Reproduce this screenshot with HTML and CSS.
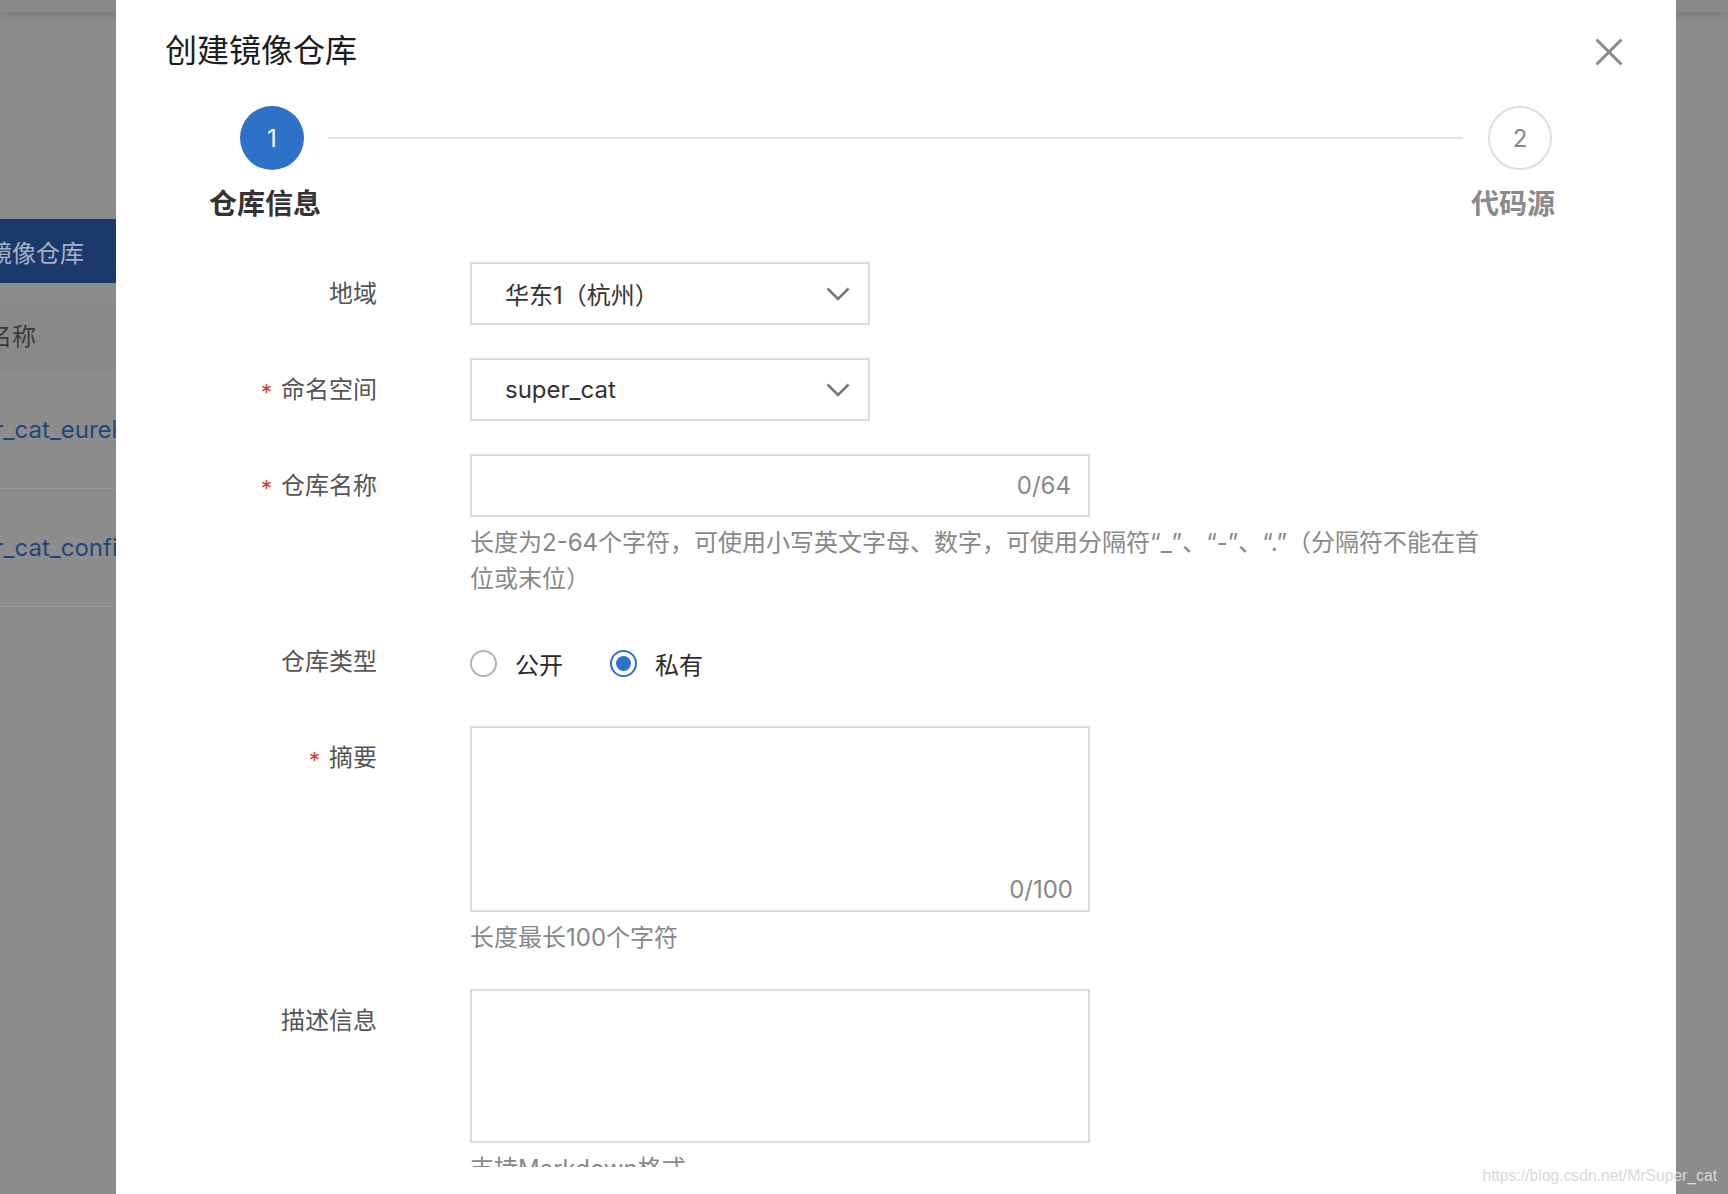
FILE: index.html
```html
<!DOCTYPE html>
<html lang="zh-CN">
<head>
<meta charset="utf-8">
<title>创建镜像仓库</title>
<link rel="stylesheet" href="styles.css">
</head>
<body>
<div class="app">
  <div class="topbar"></div>
  <div class="bg-column">
    <div class="nav-item"><span>镜像仓库</span></div>
    <div class="table-head"><span>名称</span></div>
    <div class="table-row"><span class="link">super_cat_eureka</span></div>
    <div class="table-row"><span class="link">super_cat_config</span></div>
  </div>
</div>

<div class="modal">
  <div class="modal-header">
    <div class="modal-title">创建镜像仓库</div>
    <svg class="close" width="28" height="28" viewBox="0 0 28 28"><path d="M1.5 1.5L26.5 26.5M26.5 1.5L1.5 26.5" stroke="#8a8a8a" stroke-width="3" fill="none"/></svg>
  </div>
  <div class="modal-body">
    <div class="steps">
      <div class="step active">
        <div class="step-dot">1</div>
        <div class="step-label">仓库信息</div>
      </div>
      <div class="step-line"></div>
      <div class="step pending">
        <div class="step-dot">2</div>
        <div class="step-label">代码源</div>
      </div>
    </div>

    <div class="form">
      <div class="form-row">
        <div class="form-label">地域</div>
        <div class="control">
          <div class="select narrow">
            <span>华东1（杭州）</span>
            <svg class="chevron" width="24" height="14" viewBox="0 0 24 14"><polyline points="1.5,1.5 12,12 22.5,1.5" stroke="#777" stroke-width="2.5" fill="none"/></svg>
          </div>
        </div>
      </div>

      <div class="form-row">
        <div class="form-label"><span class="req">*</span>命名空间</div>
        <div class="control">
          <div class="select narrow">
            <span>super_cat</span>
            <svg class="chevron" width="24" height="14" viewBox="0 0 24 14"><polyline points="1.5,1.5 12,12 22.5,1.5" stroke="#777" stroke-width="2.5" fill="none"/></svg>
          </div>
        </div>
      </div>

      <div class="form-row">
        <div class="form-label"><span class="req">*</span>仓库名称</div>
        <div class="control">
          <div class="input wide"><span class="counter">0/64</span></div>
          <div class="help">长度为2-64个字符，可使用小写英文字母、数字，可使用分隔符“_”、“-”、“.”（分隔符不能在首位或末位）</div>
        </div>
      </div>

      <div class="form-row">
        <div class="form-label">仓库类型</div>
        <div class="control">
          <div class="radio-group">
            <div class="radio"><span class="radio-circle"></span><span>公开</span></div>
            <div class="radio checked"><span class="radio-circle"></span><span>私有</span></div>
          </div>
        </div>
      </div>

      <div class="form-row">
        <div class="form-label"><span class="req">*</span>摘要</div>
        <div class="control">
          <div class="textarea summary"><span class="counter">0/100</span></div>
          <div class="help">长度最长100个字符</div>
        </div>
      </div>

      <div class="form-row">
        <div class="form-label">描述信息</div>
        <div class="control">
          <div class="textarea desc"></div>
          <div class="help">支持Markdown格式</div>
        </div>
      </div>
    </div>
  </div>
  <div class="modal-footer"></div>
</div>

<div class="watermark">https://blog.csdn.net/MrSuper_cat</div>
</body>
</html>
```

FILE: styles.css
```css
html, body {
  margin: 0;
  padding: 0;
}

body {
  width: 1728px;
  height: 1194px;
  overflow: hidden;
  position: relative;
  background: #8c8c8c;
  font-family: Inter, "Noto Sans CJK SC", sans-serif;
  text-spacing-trim: space-all;
}

/* background page (under mask) */
.app {
  height: 1194px;
}

.topbar {
  height: 12px;
  background: #898989;
  box-shadow: 0 3px 6px rgba(0, 0, 0, 0.12);
}

.bg-column {
  width: 116px;
  overflow: hidden;
  white-space: nowrap;
  font-size: 24px;
}

.nav-item {
  margin-top: 207px;
  height: 64px;
  background: #1b3a6b;
  color: #a3b1c6;
  display: flex;
  align-items: center;
}

.nav-item span {
  margin-left: -12px;
}

.table-head {
  margin-top: 22px;
  height: 66px;
  box-sizing: border-box;
  padding-bottom: 8px;
  background: #898989;
  color: #3b3b3b;
  display: flex;
  align-items: center;
}

.table-head span {
  margin-left: -12px;
}

.table-row {
  height: 117px;
  border-bottom: 1px solid #979797;
  display: flex;
  align-items: center;
}

.link {
  color: #1f477c;
  margin-left: -61px;
}

/* modal */
.modal {
  position: absolute;
  left: 116px;
  top: 0;
  width: 1560px;
  height: 1194px;
  background: #fff;
  display: flex;
  flex-direction: column;
}

.modal-header {
  display: flex;
  justify-content: space-between;
  align-items: center;
  padding: 28px 53px 0 49px;
  height: 44px;
}

.modal-title {
  font-size: 32px;
  line-height: 44px;
  color: #1c1c1c;
  margin-top: 2px;
}

.close {
  display: block;
  margin-top: 4px;
}

.modal-body {
  flex: 1;
  overflow: hidden;
}

.modal-footer {
  height: 27px;
  flex: none;
}

/* steps */
.steps {
  display: flex;
  align-items: flex-start;
  margin: 34px 107px 0 93px;
}

.step {
  display: flex;
  flex-direction: column;
  align-items: center;
}

.step-dot {
  width: 64px;
  height: 64px;
  box-sizing: border-box;
  border-radius: 50%;
  display: flex;
  align-items: center;
  justify-content: center;
  font-size: 24px;
}

.step.active .step-dot {
  background: #2e71c8;
  color: #fff;
}

.step.pending .step-dot {
  border: 2px solid #dedede;
  color: #888;
}

.step-label {
  margin-top: 14px;
  margin-right: 14px;
  font-size: 28px;
  line-height: 40px;
  font-weight: 700;
}

.step.active .step-label {
  color: #333;
}

.step.pending .step-label {
  color: #8a8a8a;
}

.step-line {
  flex: 1;
  height: 2px;
  background: #e2e2e2;
  margin: 31px 8px 0 -7px;
}

/* form */
.form {
  margin-top: 38px;
  padding-left: 49px;
}

.form-row {
  display: grid;
  grid-template-columns: 212px 1fr;
  column-gap: 93px;
  margin-bottom: 33px;
}

.form-label {
  font-size: 24px;
  line-height: 63px;
  height: 63px;
  color: #555;
  text-align: right;
  white-space: nowrap;
}

.req {
  color: #d8352a;
  font-size: 22px;
  line-height: 1;
  margin-right: 9px;
  vertical-align: -2px;
}

.select,
.input,
.textarea {
  box-sizing: border-box;
  border: 2px solid #dcdcdc;
  font-size: 24px;
  background: #fff;
}

.select {
  height: 63px;
  display: flex;
  align-items: center;
  justify-content: space-between;
  padding: 0 18px 0 33px;
  color: #333;
}

.narrow {
  width: 400px;
}

.chevron {
  display: block;
}

.input {
  height: 63px;
  display: flex;
  align-items: center;
  justify-content: flex-end;
  padding: 0 17px;
}

.wide {
  width: 620px;
}

.counter {
  color: #888;
  font-size: 24px;
  line-height: 36px;
}

.textarea {
  width: 620px;
  display: flex;
  align-items: flex-end;
  justify-content: flex-end;
  padding: 0 15px 2px;
}

.summary {
  height: 186px;
}

.desc {
  height: 154px;
}

.help {
  margin-top: 8px;
  width: 1020px;
  font-size: 24px;
  line-height: 36px;
  color: #888;
}

/* radios */
.radio-group {
  display: flex;
  align-items: center;
  height: 63px;
  gap: 47px;
  padding-top: 4px;
  box-sizing: border-box;
}

.radio {
  display: flex;
  align-items: center;
  gap: 18px;
  font-size: 24px;
  color: #2a2a2a;
}

.radio-circle {
  width: 27px;
  height: 27px;
  box-sizing: border-box;
  border-radius: 50%;
  border: 2px solid #b3b3b3;
  display: flex;
  align-items: center;
  justify-content: center;
}

.radio.checked .radio-circle {
  border-color: #2e71c8;
}

.radio.checked .radio-circle::after {
  content: "";
  width: 15px;
  height: 15px;
  border-radius: 50%;
  background: #2e71c8;
}

/* watermark */
.watermark {
  position: absolute;
  right: 11px;
  bottom: 9px;
  font-family: "Liberation Sans", Arial, sans-serif;
  font-size: 15.7px;
  color: #d8d8d8;
}
```
